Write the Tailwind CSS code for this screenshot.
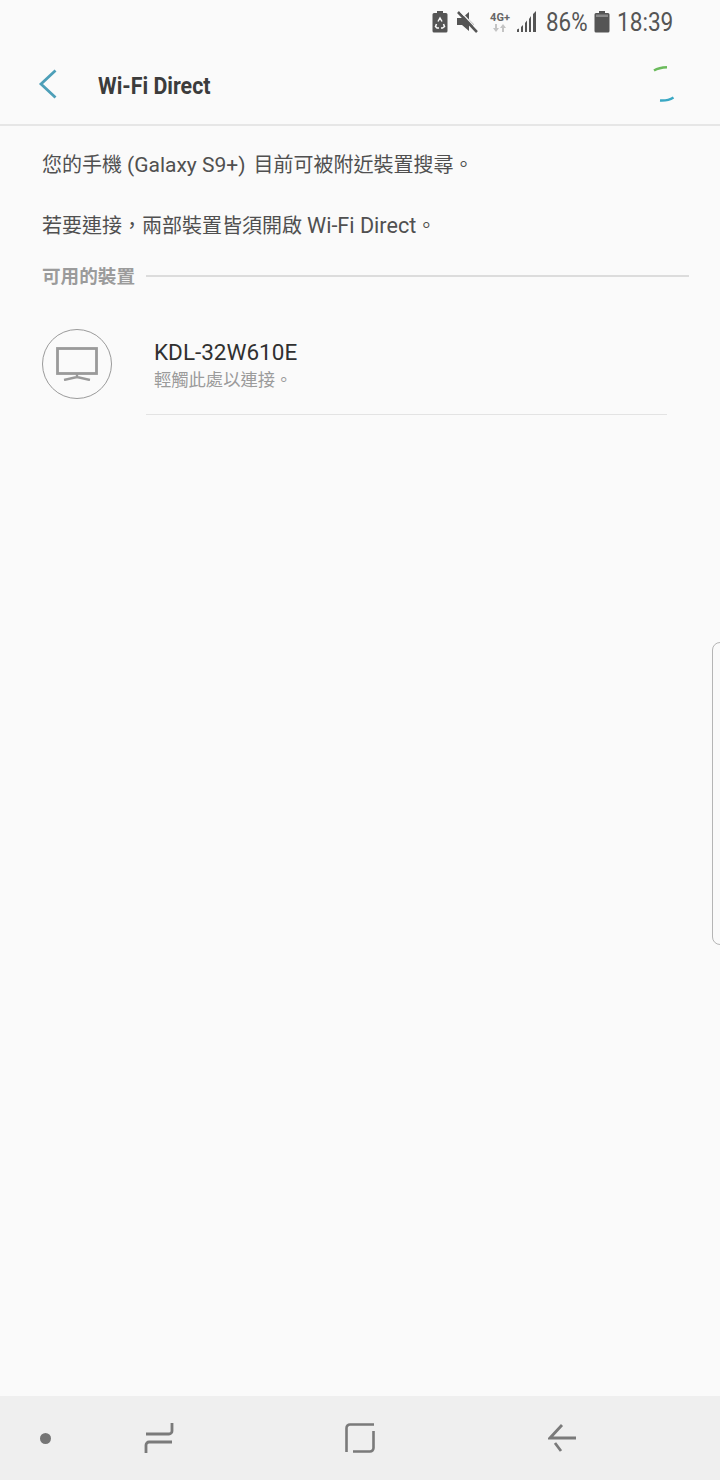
<!DOCTYPE html>
<html lang="zh-Hant">
<head>
  <meta charset="UTF-8" />
  <meta name="viewport" content="width=device-width, initial-scale=1.0"/>
  <title>Wi-Fi Direct</title>
  <script src="https://cdn.jsdelivr.net/npm/@tailwindcss/browser@4"></script>
</head>
<body class="bg-[#fafafa] font-['Roboto','Noto_Sans_CJK_TC',sans-serif] antialiased">
  <div class="relative flex flex-col w-[720px] h-[1480px] overflow-hidden">

    <!-- Status bar -->
    <div class="flex items-center justify-end h-[44px] pr-[47px] text-[#555555]">
      <svg class="w-[16px] h-[24px]" viewBox="0 0 16 24">
        <path fill="#555555" d="M5 1h6v2h3a1.500 1.500 0 0 1 1.500 1.500V21a1.500 1.500 0 0 1-1.500 1.500H2A1.500 1.500 0 0 1 .5 21V4.500A1.500 1.500 0 0 1 2 3h3z"/>
        <path fill="none" stroke="#fafafa" stroke-width="1.500" d="M6 11.500L8 8l2 3.500M11.500 14l1 2.500-2 1.500H9M7 18H5l-1.500-1.500 1-2.500"/>
      </svg>
      <svg class="ml-[9px] w-[22px] h-[24px]" viewBox="0 0 22 24">
        <path fill="#555555" d="M0 8h5l7-6v7.500L17 14.500l-1.500 3.500-3.500-3.500V21l-7-6H0z"/>
        <path fill="none" stroke="#555555" stroke-width="2.600" d="M1 2l19 20"/>
        <path fill="none" stroke="#fafafa" stroke-width="1.200" d="M3 1l19 20"/>
      </svg>
      <div class="ml-[10px] flex flex-col items-center w-[22px]">
        <span class="text-[11px] leading-[12px] font-bold text-[#666666]">4G+</span>
        <svg class="w-[14px] h-[8px]" viewBox="0 0 14 8">
          <path fill="#c4c4c4" d="M2 0h2v4h2L3 8 0 4h2zM10 0l3 4h-2v4H9V4H7z"/>
        </svg>
      </div>
      <svg class="ml-[5px] w-[22px] h-[24px]" viewBox="0 0 22 24">
        <path fill="#555555" d="M1 19.500l2-1V22H1zM5 17l2-2v7H5zM9 13l2-2.500V22H9zM13 9l2-3v16h-2zM17 4l3-3v21h-3z"/>
      </svg>
      <span class="ml-[8px] w-[41px] text-[26px] leading-[44px] origin-left scale-x-[0.86] whitespace-nowrap">86%</span>
      <svg class="ml-[7px] w-[16px] h-[24px]" viewBox="0 0 16 24">
        <path fill="#555555" d="M5 1h6v2h3a1.500 1.500 0 0 1 1.500 1.500V21a1.500 1.500 0 0 1-1.500 1.500H2A1.500 1.500 0 0 1 .5 21V4.500A1.500 1.500 0 0 1 2 3h3z"/>
        <path fill="#8a8a8a" d="M2 4.500h12V7H2z"/>
      </svg>
      <span class="ml-[7px] w-[56px] text-[26px] leading-[44px] origin-left scale-x-[0.87] whitespace-nowrap">18:39</span>
    </div>

    <!-- Header -->
    <header class="relative flex items-center h-[82px] border-b-2 border-[#e6e6e6]">
      <svg class="ml-[38px] w-[20px] h-[30px]" viewBox="0 0 20 30">
        <path fill="none" stroke="#4d9fb8" stroke-width="2.800" d="M17.500 1.500L3 15l14.500 13.500"/>
      </svg>
      <h1 class="ml-[40px] mt-[3px] text-[24px] font-bold origin-left scale-x-[0.89] whitespace-nowrap text-[#3c3c3c]">Wi-Fi Direct</h1>
      <svg class="absolute left-[650px] top-[20px] w-[28px] h-[40px]" viewBox="0 0 28 40">
        <path fill="none" stroke="#6bbb5c" stroke-width="2.400" d="M4 6.500Q9 3.500 17 3.200"/>
        <path fill="none" stroke="#3aa8c4" stroke-width="2.400" d="M10 36.500q8 .5 13.500-3"/>
      </svg>
    </header>

    <!-- Content -->
    <main class="flex-1 text-[#505050]">
      <p class="pl-[42px] mt-[23px] text-[20px] leading-[32px]">您的手機 <span class="text-[21px] mr-[3px]">(Galaxy S9+)</span> 目前可被附近裝置搜尋。</p>
      <p class="pl-[42px] mt-[29px] text-[20px] leading-[32px]">若要連接，兩部裝置皆須開啟 <span class="text-[21.600px]">Wi-Fi Direct</span>。</p>

      <div class="flex items-center pl-[42px] pr-[31px] mt-[21px] h-[26px]">
        <span class="pt-[4px] text-[18.600px] font-bold text-[#9b9b9b]">可用的裝置</span>
        <div class="flex-1 ml-[11px] h-[2px] bg-[#dcdcdc]"></div>
      </div>

      <div class="flex pl-[42px] mt-[40px]">
        <div class="flex items-center justify-center w-[70px] h-[70px] rounded-full border border-[#9a9a9a]">
          <svg class="w-[42px] h-[34px]" viewBox="0 0 42 34">
            <rect x="1.500" y="1.500" width="39" height="25" fill="none" stroke="#9a9a9a" stroke-width="2.800"/>
            <path fill="none" stroke="#9a9a9a" stroke-width="2.400" d="M21 27v3M8 33l13-3 13 3"/>
          </svg>
        </div>
        <div class="ml-[34px] w-[521px] h-[87px] -mt-[1px] border-b border-[#e3e3e3]">
          <div class="pl-[8px] text-[22.500px] leading-[30px] mt-[9px] text-[#303030]">KDL-32W610E</div>
          <div class="pl-[8px] text-[17.300px] leading-[24px] mt-[1px] text-[#9b9b9b]">輕觸此處以連接。</div>
        </div>
      </div>
    </main>

    <!-- Side handle -->
    <div class="absolute left-[712px] top-[642px] w-[12px] h-[303px] rounded-l-[8px] border border-[#b5b5b5] bg-[#fafafa]"></div>

    <!-- Nav bar -->
    <nav class="flex items-center h-[84px] bg-[#efefef]">
      <div class="ml-[40px] w-[11px] h-[11px] rounded-full bg-[#757575]"></div>
      <svg class="ml-[93px] w-[30px] h-[34px]" viewBox="0 0 30 34">
        <path fill="none" stroke="#7a7a7a" stroke-width="2.800" d="M2 13h23a3 3 0 0 0 3-3V2M28 21H5a3 3 0 0 0-3 3v8"/>
      </svg>
      <svg class="ml-[171px] w-[30px] h-[30px]" viewBox="0 0 30 30">
        <path fill="none" stroke="#7a7a7a" stroke-width="2.600" d="M1.500 29V5a3.500 3.500 0 0 1 3.500-3.500h24M28.500 8v17a3.500 3.500 0 0 1-3.500 3.500H8"/>
      </svg>
      <svg class="ml-[173px] w-[30px] h-[32px]" viewBox="0 0 30 32">
        <path fill="none" stroke="#7a7a7a" stroke-width="2.800" d="M28 16H2L14 3M7 21l6 8"/>
      </svg>
    </nav>
  </div>
</body>
</html>
